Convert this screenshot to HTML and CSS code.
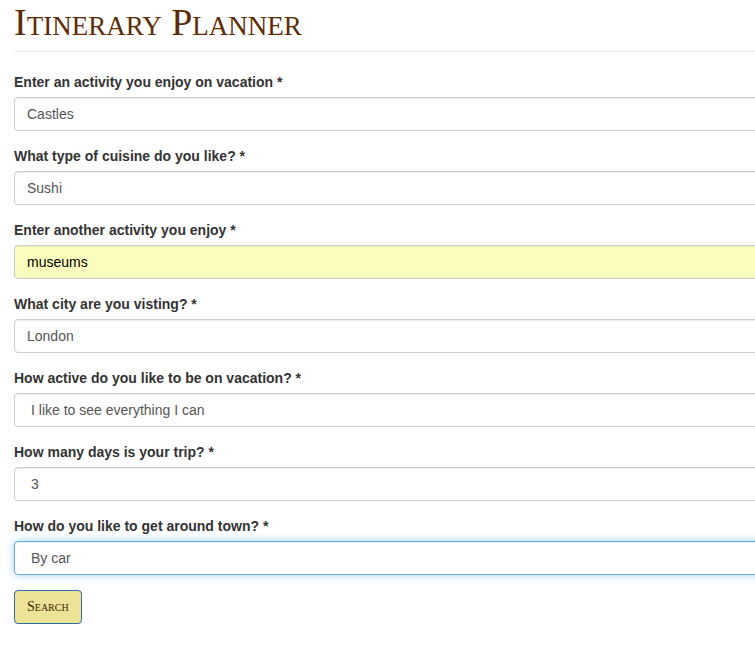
FILE: index.html
```html
<!DOCTYPE html>
<html>
<head>
<meta charset="utf-8">
<link rel="stylesheet" href="styles.css">
</head>
<body>
<div class="container">
  <div class="page-header">
    <h1 class="title">Itinerary Planner</h1>
  </div>
  <form class="form">
    <div class="form-group">
      <label class="label">Enter an activity you enjoy on vacation *</label>
      <div class="control">Castles</div>
    </div>
    <div class="form-group">
      <label class="label">What type of cuisine do you like? *</label>
      <div class="control">Sushi</div>
    </div>
    <div class="form-group">
      <label class="label">Enter another activity you enjoy *</label>
      <div class="control autofill">museums</div>
    </div>
    <div class="form-group">
      <label class="label">What city are you visting? *</label>
      <div class="control">London</div>
    </div>
    <div class="form-group">
      <label class="label">How active do you like to be on vacation? *</label>
      <div class="control select">I like to see everything I can</div>
    </div>
    <div class="form-group">
      <label class="label">How many days is your trip? *</label>
      <div class="control select">3</div>
    </div>
    <div class="form-group">
      <label class="label">How do you like to get around town? *</label>
      <div class="control select focus">By car</div>
    </div>
    <button type="button" class="btn">Search</button>
  </form>
</div>
</body>
</html>
```

FILE: styles.css
```css
html, body {
  margin: 0;
  padding: 0;
  overflow: hidden;
  background: #fff;
}
body {
  font-family: "Liberation Sans", Arial, sans-serif;
  font-size: 14px;
  line-height: 20px;
  color: #333;
}
.container {
  width: 800px;
  padding-left: 14px;
}
.page-header {
  border-bottom: 1px solid #eee;
  padding-bottom: 9px;
  margin-bottom: 20px;
}
.title {
  margin: 0;
  padding-top: 3px;
  font-family: "Liberation Serif", "Times New Roman", serif;
  font-variant: small-caps;
  font-weight: normal;
  font-size: 38px;
  line-height: 39px;
  color: #5e2c04;
  letter-spacing: 0;
}
.form-group {
  margin-bottom: 15px;
  display: flex;
  flex-direction: column;
}
.label {
  font-weight: bold;
  margin-bottom: 5px;
  display: block;
}
.control {
  height: 34px;
  box-sizing: border-box;
  padding: 6px 12px;
  border: 1px solid #ccc;
  border-radius: 4px;
  box-shadow: inset 0 1px 1px rgba(0,0,0,.075);
  color: #555;
  line-height: 20px;
  background: #fff;
}
.select {
  padding-left: 16px;
}
.autofill {
  background: #fafdbd;
  color: #000;
}
.focus {
  border-color: #66afe9;
  box-shadow: inset 0 1px 1px rgba(0,0,0,.075), 0 0 8px rgba(102,175,233,.6);
}
.btn {
  display: block;
  box-sizing: border-box;
  height: 34px;
  padding: 6px 12px;
  border: 1px solid #2e6da4;
  border-radius: 4px;
  background: #ece396;
  font-family: "Liberation Serif", "Times New Roman", serif;
  font-variant: small-caps;
  font-size: 14px;
  color: #3d1c02;
  margin: 0;
}
```
